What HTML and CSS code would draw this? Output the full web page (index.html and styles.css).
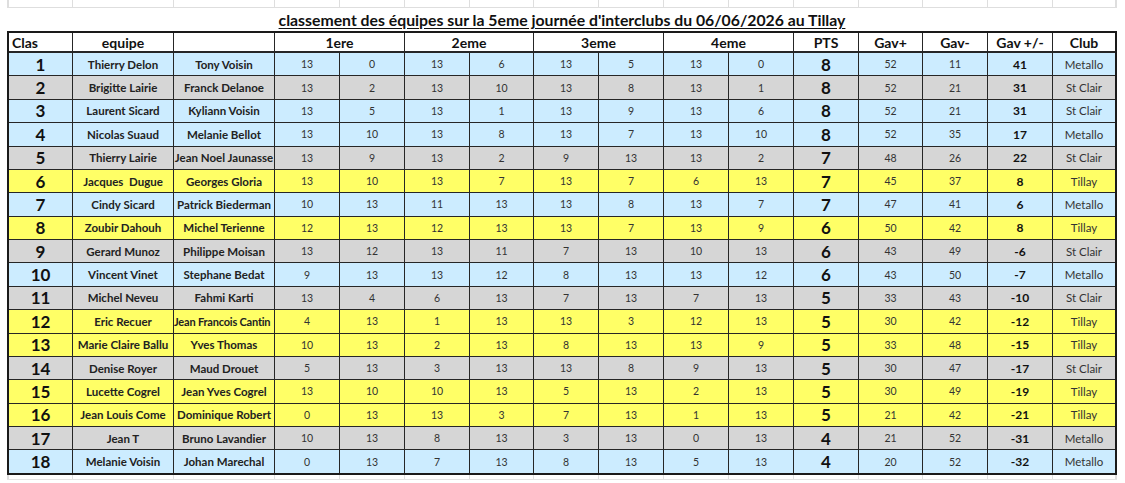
FILE: index.html
```html
<!DOCTYPE html>
<html lang="fr">
<head>
<meta charset="utf-8">
<title>Classement interclubs</title>
<link rel="stylesheet" href="styles.css">
</head>
<body>
<div class="sheet">
  <div class="strip strip-top">
    <div class="sc"></div><div class="sc"></div><div class="sc"></div><div class="sc"></div><div class="sc"></div><div class="sc"></div><div class="sc"></div><div class="sc"></div><div class="sc"></div><div class="sc"></div><div class="sc"></div><div class="sc"></div><div class="sc"></div><div class="sc"></div><div class="sc"></div><div class="sc"></div>
  </div>
  <div class="title-row"><h1 class="title">classement des équipes sur la 5eme journée d'interclubs du 06/06/2026 au Tillay</h1></div>
  <div class="table">
    <div class="row head">
      <div class="c hl">Clas</div><div class="c">equipe</div><div class="c"></div>
      <div class="c s2">1ere</div><div class="c s2">2eme</div><div class="c s2">3eme</div><div class="c s2">4eme</div>
      <div class="c">PTS</div><div class="c">Gav+</div><div class="c">Gav-</div><div class="c">Gav +/-</div><div class="c">Club</div>
    </div>
    <div class="row blue"><div class="c rk">1</div><div class="c nm">Thierry Delon</div><div class="c nm">Tony Voisin</div><div class="c">13</div><div class="c">0</div><div class="c">13</div><div class="c">6</div><div class="c">13</div><div class="c">5</div><div class="c">13</div><div class="c">0</div><div class="c pt">8</div><div class="c">52</div><div class="c">11</div><div class="c df">41</div><div class="c cl">Metallo</div></div>
    <div class="row gray"><div class="c rk">2</div><div class="c nm">Brigitte Lairie</div><div class="c nm">Franck Delanoe</div><div class="c">13</div><div class="c">2</div><div class="c">13</div><div class="c">10</div><div class="c">13</div><div class="c">8</div><div class="c">13</div><div class="c">1</div><div class="c pt">8</div><div class="c">52</div><div class="c">21</div><div class="c df">31</div><div class="c cl">St Clair</div></div>
    <div class="row blue"><div class="c rk">3</div><div class="c nm">Laurent Sicard</div><div class="c nm">Kyliann Voisin</div><div class="c">13</div><div class="c">5</div><div class="c">13</div><div class="c">1</div><div class="c">13</div><div class="c">9</div><div class="c">13</div><div class="c">6</div><div class="c pt">8</div><div class="c">52</div><div class="c">21</div><div class="c df">31</div><div class="c cl">St Clair</div></div>
    <div class="row blue"><div class="c rk">4</div><div class="c nm">Nicolas Suaud</div><div class="c nm">Melanie Bellot</div><div class="c">13</div><div class="c">10</div><div class="c">13</div><div class="c">8</div><div class="c">13</div><div class="c">7</div><div class="c">13</div><div class="c">10</div><div class="c pt">8</div><div class="c">52</div><div class="c">35</div><div class="c df">17</div><div class="c cl">Metallo</div></div>
    <div class="row gray"><div class="c rk">5</div><div class="c nm">Thierry Lairie</div><div class="c nm">Jean Noel Jaunasse</div><div class="c">13</div><div class="c">9</div><div class="c">13</div><div class="c">2</div><div class="c">9</div><div class="c">13</div><div class="c">13</div><div class="c">2</div><div class="c pt">7</div><div class="c">48</div><div class="c">26</div><div class="c df">22</div><div class="c cl">St Clair</div></div>
    <div class="row yellow"><div class="c rk">6</div><div class="c nm">Jacques&nbsp; Dugue</div><div class="c nm">Georges Gloria</div><div class="c">13</div><div class="c">10</div><div class="c">13</div><div class="c">7</div><div class="c">13</div><div class="c">7</div><div class="c">6</div><div class="c">13</div><div class="c pt">7</div><div class="c">45</div><div class="c">37</div><div class="c df">8</div><div class="c cl">Tillay</div></div>
    <div class="row blue"><div class="c rk">7</div><div class="c nm">Cindy Sicard</div><div class="c nm">Patrick Biederman</div><div class="c">10</div><div class="c">13</div><div class="c">11</div><div class="c">13</div><div class="c">13</div><div class="c">8</div><div class="c">13</div><div class="c">7</div><div class="c pt">7</div><div class="c">47</div><div class="c">41</div><div class="c df">6</div><div class="c cl">Metallo</div></div>
    <div class="row yellow"><div class="c rk">8</div><div class="c nm">Zoubir Dahouh</div><div class="c nm">Michel Terienne</div><div class="c">12</div><div class="c">13</div><div class="c">12</div><div class="c">13</div><div class="c">13</div><div class="c">7</div><div class="c">13</div><div class="c">9</div><div class="c pt">6</div><div class="c">50</div><div class="c">42</div><div class="c df">8</div><div class="c cl">Tillay</div></div>
    <div class="row gray"><div class="c rk">9</div><div class="c nm">Gerard Munoz</div><div class="c nm">Philippe Moisan</div><div class="c">13</div><div class="c">12</div><div class="c">13</div><div class="c">11</div><div class="c">7</div><div class="c">13</div><div class="c">10</div><div class="c">13</div><div class="c pt">6</div><div class="c">43</div><div class="c">49</div><div class="c df">-6</div><div class="c cl">St Clair</div></div>
    <div class="row blue"><div class="c rk">10</div><div class="c nm">Vincent Vinet</div><div class="c nm">Stephane Bedat</div><div class="c">9</div><div class="c">13</div><div class="c">13</div><div class="c">12</div><div class="c">8</div><div class="c">13</div><div class="c">13</div><div class="c">12</div><div class="c pt">6</div><div class="c">43</div><div class="c">50</div><div class="c df">-7</div><div class="c cl">Metallo</div></div>
    <div class="row gray"><div class="c rk">11</div><div class="c nm">Michel Neveu</div><div class="c nm">Fahmi Karti</div><div class="c">13</div><div class="c">4</div><div class="c">6</div><div class="c">13</div><div class="c">7</div><div class="c">13</div><div class="c">7</div><div class="c">13</div><div class="c pt">5</div><div class="c">33</div><div class="c">43</div><div class="c df">-10</div><div class="c cl">St Clair</div></div>
    <div class="row yellow"><div class="c rk">12</div><div class="c nm">Eric Recuer</div><div class="c nm ov">Jean Francois Cantin</div><div class="c">4</div><div class="c">13</div><div class="c">1</div><div class="c">13</div><div class="c">13</div><div class="c">3</div><div class="c">12</div><div class="c">13</div><div class="c pt">5</div><div class="c">30</div><div class="c">42</div><div class="c df">-12</div><div class="c cl">Tillay</div></div>
    <div class="row yellow"><div class="c rk">13</div><div class="c nm">Marie Claire Ballu</div><div class="c nm">Yves Thomas</div><div class="c">10</div><div class="c">13</div><div class="c">2</div><div class="c">13</div><div class="c">8</div><div class="c">13</div><div class="c">13</div><div class="c">9</div><div class="c pt">5</div><div class="c">33</div><div class="c">48</div><div class="c df">-15</div><div class="c cl">Tillay</div></div>
    <div class="row gray"><div class="c rk">14</div><div class="c nm">Denise Royer</div><div class="c nm">Maud Drouet</div><div class="c">5</div><div class="c">13</div><div class="c">3</div><div class="c">13</div><div class="c">13</div><div class="c">8</div><div class="c">9</div><div class="c">13</div><div class="c pt">5</div><div class="c">30</div><div class="c">47</div><div class="c df">-17</div><div class="c cl">St Clair</div></div>
    <div class="row yellow"><div class="c rk">15</div><div class="c nm">Lucette Cogrel</div><div class="c nm">Jean Yves Cogrel</div><div class="c">13</div><div class="c">10</div><div class="c">10</div><div class="c">13</div><div class="c">5</div><div class="c">13</div><div class="c">2</div><div class="c">13</div><div class="c pt">5</div><div class="c">30</div><div class="c">49</div><div class="c df">-19</div><div class="c cl">Tillay</div></div>
    <div class="row yellow"><div class="c rk">16</div><div class="c nm">Jean Louis Come</div><div class="c nm">Dominique Robert</div><div class="c">0</div><div class="c">13</div><div class="c">13</div><div class="c">3</div><div class="c">7</div><div class="c">13</div><div class="c">1</div><div class="c">13</div><div class="c pt">5</div><div class="c">21</div><div class="c">42</div><div class="c df">-21</div><div class="c cl">Tillay</div></div>
    <div class="row gray"><div class="c rk">17</div><div class="c nm">Jean T</div><div class="c nm">Bruno Lavandier</div><div class="c">10</div><div class="c">13</div><div class="c">8</div><div class="c">13</div><div class="c">3</div><div class="c">13</div><div class="c">0</div><div class="c">13</div><div class="c pt">4</div><div class="c">21</div><div class="c">52</div><div class="c df">-31</div><div class="c cl">Metallo</div></div>
    <div class="row blue"><div class="c rk">18</div><div class="c nm">Melanie Voisin</div><div class="c nm">Johan Marechal</div><div class="c">0</div><div class="c">13</div><div class="c">7</div><div class="c">13</div><div class="c">8</div><div class="c">13</div><div class="c">5</div><div class="c">13</div><div class="c pt">4</div><div class="c">20</div><div class="c">52</div><div class="c df">-32</div><div class="c cl">Metallo</div></div>
  </div>
  <div class="strip strip-bottom">
    <div class="sc"></div><div class="sc"></div><div class="sc"></div><div class="sc"></div><div class="sc"></div><div class="sc"></div><div class="sc"></div><div class="sc"></div><div class="sc"></div><div class="sc"></div><div class="sc"></div><div class="sc"></div><div class="sc"></div><div class="sc"></div><div class="sc"></div><div class="sc"></div>
  </div>
</div>
</body>
</html>
```

FILE: styles.css
```css
html, body {
  margin: 0;
  padding: 0;
  background: #ffffff;
}
body {
  font-family: Lato, "Liberation Sans", sans-serif;
  color: #333;
  width: 1125px;
  height: 483px;
  overflow: hidden;
}
.sheet {
  padding-left: 7px;
}
.strip {
  display: grid;
  grid-template-columns: 63px 100px 100px 64px 64px 64px 63px 64px 64px 64px 64px 64px 63px 64px 64px 62px;
  column-gap: 1px;
  background: #dedede;
  padding: 0 2px;
  width: 1106px;
}
.sc {
  background: #fff;
}
.strip-top {
  height: 7px;
  border-bottom: 1px solid #dedede;
}
.strip-bottom {
  height: 4px;
  border-bottom: 1px solid #e4e4e4;
}
.title-row {
  height: 23px;
  width: 1110px;
  display: flex;
  align-items: flex-end;
  justify-content: center;
}
.title {
  margin: 0 0 2px 0;
  font-size: 15.8px;
  font-weight: 700;
  color: #111;
  text-decoration: underline;
  text-underline-offset: 2px;
  line-height: 18px;
}
.table {
  width: 1106px;
  border: 2px solid #1a1a1a;
  background: #262626;
  display: flex;
  flex-direction: column;
  row-gap: 1px;
}
.row {
  display: grid;
  grid-template-columns: 63px 100px 100px 64px 64px 64px 63px 64px 64px 64px 64px 64px 63px 64px 64px 62px;
  column-gap: 1px;
  height: 22.39px;
}
.row.head {
  height: 18px;
  margin-bottom: 1px;
  --bg: #ffffff;
}
.row.blue { --bg: #ccecff; }
.row.gray { --bg: #d6d6d6; }
.row.yellow { --bg: #ffff66; }
.c {
  background: var(--bg);
  display: flex;
  align-items: center;
  justify-content: center;
  font-size: 10.5px;
  color: #333;
  white-space: nowrap;
  overflow: hidden;
}
.head .c {
  font-size: 14px;
  font-weight: 700;
  color: #111;
}
.head .c.hl {
  justify-content: flex-start;
  padding-left: 3px;
}
.head .c.s2 {
  grid-column: span 2;
}
.c.rk {
  font-size: 17px;
  font-weight: 700;
  color: #111;
}
.c.nm {
  font-size: 11.5px;
  font-weight: 700;
  color: #222;
}
.c.nm.ov {
  justify-content: flex-start;
  font-size: 11px;
  letter-spacing: -0.2px;
}
.c.pt {
  font-size: 17px;
  font-weight: 700;
  color: #111;
}
.c.df {
  font-size: 12px;
  font-weight: 700;
  color: #111;
}
.c.cl {
  font-size: 11.5px;
  color: #333;
}
```
